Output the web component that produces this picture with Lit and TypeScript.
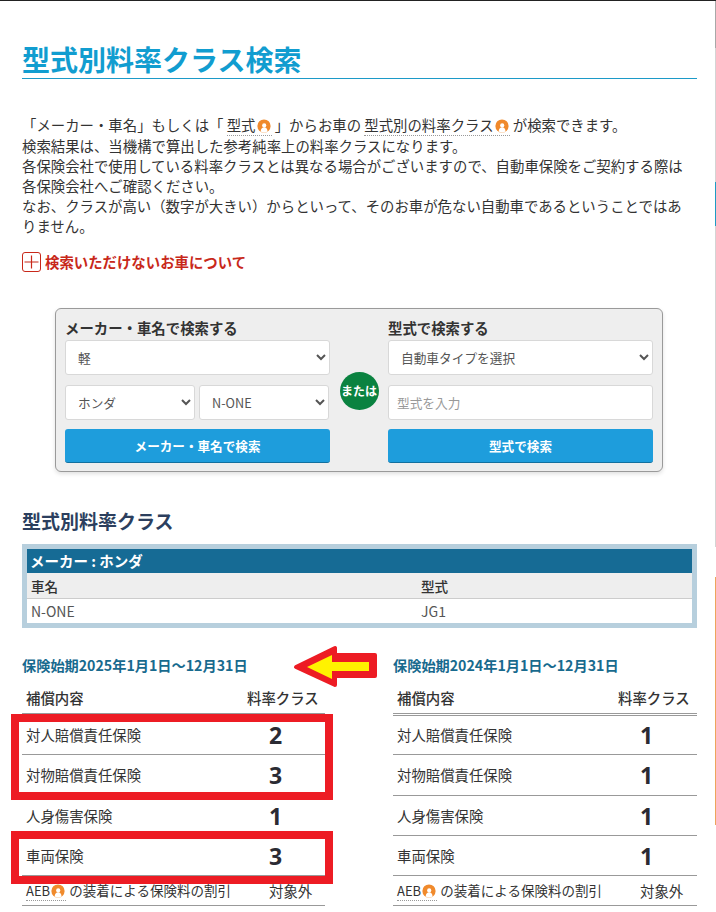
import { LitElement, html, css, svg } from "lit";
import { customElement } from "lit/decorators.js";

const orange = html`<svg class="ico" viewBox="0 0 14 14" aria-hidden="true"><circle cx="7" cy="7" r="6.6" fill="#f08a2c"/><circle cx="7.2" cy="6.4" r="2.1" fill="#fff"/><path d="M3.6 12.4c.3-3 1.8-4.2 3.6-4.2s3.1 1.2 3.4 4.2A6.6 6.6 0 0 1 3.6 12.4z" fill="#fff"/></svg>`;

const rows = ["対人賠償責任保険", "対物賠償責任保険", "人身傷害保険", "車両保険"];

@customElement("app-root")
export class AppRoot extends LitElement {
  static styles = css`
    :host {
      display: flex;
      width: 716px;
      height: 912px;
      overflow: hidden;
      position: relative;
      background: #fff;
      color: #333;
      font-family: "Noto Sans CJK JP", "Noto Sans", sans-serif;
      font-size: 14.4px;
      line-height: 20px;
    }
    .topline { position: absolute; left: 0; right: 0; top: 0; height: 1px; background: #222; }
    .page { flex: 1; min-width: 0; padding: 44px 18px 0 22px; box-sizing: border-box; }
    .rail { width: 1px; display: flex; flex-direction: column; }
    .rail i { display: block; }
    .r1 { height: 48px; background: #a8a8a8; }
    .r2 { height: 134px; background: #d4d4d4; }
    .r3 { height: 44px; background: #1d9cc4; }
    .r4 { height: 321px; background: #d4d4d4; }
    .r5 { height: 30px; }
    .r6 { height: 248px; background: #eda55c; }
    h1 {
      margin: 0;
      height: 35px;
      box-sizing: border-box;
      border-bottom: 1px solid #1c9ac8;
      color: #119dd0;
      font-size: 28px;
      line-height: 30px;
      font-weight: 700;
    }
    .intro { margin: 37px 0 0; max-width: 666px; }
    .intro .l1 { display: block; height: 20px; line-height: 18px; white-space: nowrap; }
    .term { border-bottom: 1px dotted #999; }
    .ico { width: 14px; height: 14px; vertical-align: -2px; margin: 0 1px; }
    .more {
      margin-top: 16px;
      display: flex;
      align-items: center;
      gap: 4px;
      color: #c8281a;
      font-weight: 700;
      height: 20px;
    }
    .plus {
      width: 19px;
      height: 20px;
      box-sizing: border-box;
      border: 1px solid #c8281a;
      border-radius: 3px;
      flex: none;
    }
    .plus svg { display: block; width: 17px; height: 18px; }
    .search {
      margin: 36px 0 0 33px;
      width: 608px;
      height: 164px;
      box-sizing: border-box;
      background: #eee;
      border: 1px solid #9a9a9a;
      border-radius: 6px;
      box-shadow: 0 2px 4px rgba(0,0,0,.12);
      padding: 10px 9px;
      display: grid;
      grid-template-columns: 265px 58px 265px;
    }
    .col { display: flex; flex-direction: column; }
    .col label { font-weight: 700; font-size: 14.4px; line-height: 17px; height: 21px; color: #333; white-space: nowrap; }
    select, input {
      box-sizing: border-box;
      height: 35px;
      border: 1px solid #d8d8d8;
      border-radius: 3px;
      background-color: #fff;
      font: inherit;
      font-size: 12.7px;
      color: #555;
      padding: 0 8px;
      width: 100%;
      min-width: 0;
      outline: none;
    }
    input::placeholder { color: #999; }
    .pair { display: flex; gap: 4px; margin-top: 10px; }
    .pair select { flex: none; width: 130px; }
    .pad { margin-top: 10px; }
    button {
      margin-top: 9px;
      height: 34px;
      border: 0;
      border-bottom: 1px solid #12709f;
      border-radius: 3px;
      background: #1e9ddc;
      color: #fff;
      font: inherit;
      font-size: 12.6px;
      font-weight: 700;
    }
    .or { display: flex; justify-content: center; padding-top: 53px; }
    .or span {
      width: 39px;
      height: 38px;
      border-radius: 50%;
      background: #0a8240;
      color: #fff;
      font-size: 12px;
      font-weight: 700;
      display: flex;
      align-items: center;
      justify-content: center;
      white-space: nowrap;
    }
    h2 {
      margin: 37px 0 0;
      font-size: 19px;
      line-height: 24px;
      font-weight: 700;
      color: #2c3f5e;
    }
    .maker {
      margin-top: 11px;
      border: 5px solid #b7cfdd;
    }
    .maker .h {
      background: #166b95;
      color: #fff;
      font-weight: 700;
      font-size: 14.5px;
      height: 24px;
      line-height: 24px;
      padding-left: 3px;
    }
    .maker .g { display: grid; grid-template-columns: 390px 1fr; padding-left: 4px; }
    .maker .thr { background: #eee; border-bottom: 1px solid #ccc; height: 26px; box-sizing: border-box; }
    .maker .th { line-height: 26px; font-size: 13.6px; font-weight: 500; }
    .maker .td { height: 24px; line-height: 24px; font-size: 14px; color: #555; }
    .periods {
      margin-top: 27px;
      display: grid;
      grid-template-columns: 303px 304px;
      column-gap: 68px;
    }
    h3 { margin: 0; font-size: 14.2px; line-height: 20px; height: 20px; font-weight: 700; color: #186a8e; white-space: nowrap; }
    .tbl { margin-top: 13px; }
    .row {
      display: grid;
      grid-template-columns: 225px 1fr;
      align-items: center;
      height: 40px;
      box-sizing: border-box;
      border-bottom: 1px solid #999;
      padding-left: 4px;
    }
    .row.d1 { height: 39px; }
    .row.d2 { height: 41px; }
    .head {
      height: 28px;
      grid-template-columns: 221px 1fr;
      border-bottom: 3px double #999;
      font-weight: 500;
      align-items: start;
    }
    .head span { line-height: 20px; white-space: nowrap; }
    .row .n { padding-left: 18px; font-size: 23px; font-weight: 700; font-family: "Open Sans", "Noto Sans", sans-serif; color: #2b2b33; }
    .row.aeb { height: 30px; grid-template-columns: 221px 1fr; }
    .row.aeb .c { padding-left: 22px; white-space: nowrap; }
    .row.aeb .lbl { white-space: nowrap; }
    .row.aeb .lbl u { text-decoration: none; border-bottom: 1px dotted #999; font-size: 13px; }
    .row.aeb .sm { font-size: 13.5px; }
    .notes { position: absolute; inset: 0; pointer-events: none; }
    .box { position: absolute; left: 11px; width: 322px; box-sizing: border-box; border: 8px solid #ed1c24; }
    .b1 { top: 714px; height: 86px; }
    .b2 { top: 831px; height: 53px; }
    .arrow { position: absolute; left: 288px; top: 640px; width: 96px; height: 54px; }
  `;

  private period(title: string, vals: string[]) {
    return html`<section>
      <h3>${title}</h3>
      <div class="tbl">
        <div class="row head"><span>補償内容</span><span>料率クラス</span></div>
        ${rows.map((r, i) => html`<div class="row d${i + 1}"><span>${r}</span><span class="n">${vals[i]}</span></div>`)}
        <div class="row aeb"><span class="lbl"><u>AEB${orange}</u> <span class="sm">の装着による保険料の割引</span></span><span class="c">対象外</span></div>
      </div>
    </section>`;
  }

  render() {
    return html`
      <div class="page">
        <h1>型式別料率クラス検索</h1>
        <p class="intro">
          <span class="l1">「メーカー・車名」もしくは「 <span class="term">型式${orange}</span> 」からお車の <span class="term">型式別の料率クラス${orange}</span> が検索できます。</span>
          検索結果は、当機構で算出した参考純率上の料率クラスになります。<br />
          各保険会社で使用している料率クラスとは異なる場合がございますので、自動車保険をご契約する際は各保険会社へご確認ください。<br />
          なお、クラスが高い（数字が大きい）からといって、そのお車が危ない自動車であるということではありません。
        </p>
        <div class="more">
          <span class="plus"><svg viewBox="0 0 17 18"><path d="M1.5 9h14M8.5 2.5v13" stroke="#c8281a" stroke-width="1.2" fill="none"/></svg></span>
          検索いただけないお車について
        </div>
        <div class="search">
          <div class="col">
            <label>メーカー・車名で検索する</label>
            <select><option>軽</option></select>
            <div class="pair">
              <select><option>ホンダ</option></select>
              <select><option>N-ONE</option></select>
            </div>
            <button>メーカー・車名で検索</button>
          </div>
          <div class="or"><span>または</span></div>
          <div class="col">
            <label>型式で検索する</label>
            <select><option>自動車タイプを選択</option></select>
            <input class="pad" placeholder="型式を入力" />
            <button>型式で検索</button>
          </div>
        </div>
        <h2>型式別料率クラス</h2>
        <div class="maker">
          <div class="h">メーカー : ホンダ</div>
          <div class="g thr"><div class="th">車名</div><div class="th">型式</div></div>
          <div class="g"><div class="td">N-ONE</div><div class="td">JG1</div></div>
        </div>
        <div class="periods">
          ${this.period("保険始期2025年1月1日～12月31日", ["2", "3", "1", "3"])}
          ${this.period("保険始期2024年1月1日～12月31日", ["1", "1", "1", "1"])}
        </div>
      </div>
      <div class="rail"><i class="r1"></i><i class="r2"></i><i class="r3"></i><i class="r4"></i><i class="r5"></i><i class="r6"></i></div>
      <div class="topline"></div>
      <div class="notes">
        <div class="box b1"></div>
        <div class="box b2"></div>
        <svg class="arrow" viewBox="288 640 96 54">
          ${svg`<path d="M296 667 L335 648 V655 H375 V676 H335 V685 Z" fill="#ed1c24" stroke="#ed1c24" stroke-width="4" stroke-linejoin="round"/>
          <path d="M307 667 L332 655 V662 H369 V671 H332 V679 Z" fill="#fff200"/>`}
        </svg>
      </div>
    `;
  }
}
